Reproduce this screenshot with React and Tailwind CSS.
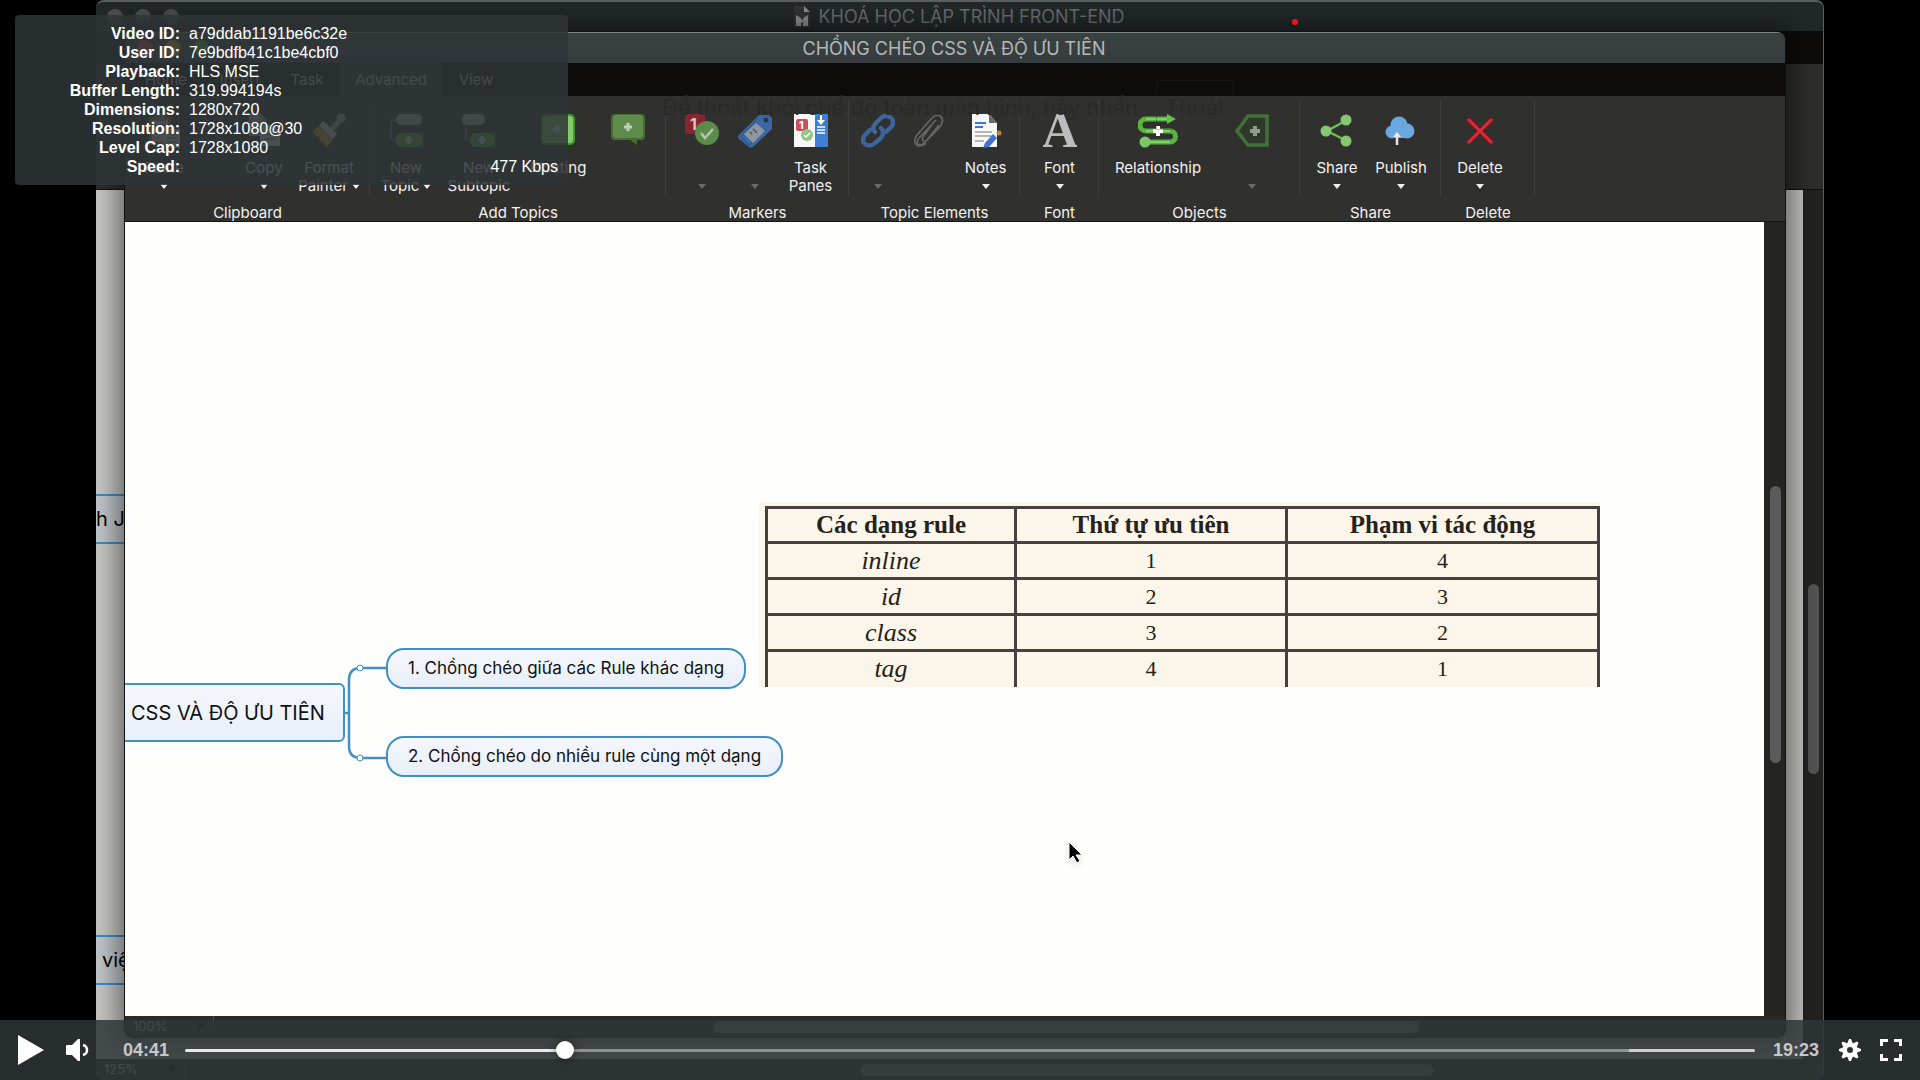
import React from "react";

const Svg = ({ children, dim, w = 34 }) => (
  <svg width={w} height="34" viewBox={`0 0 ${w} 34`} className={dim ? "opacity-60" : ""} aria-hidden="true">
    {children}
  </svg>
);

const Plus = ({ x, y, s = 4, c = "#e8ffe0", w = 3 }) => (
  <path d={`M${x - s} ${y}H${x + s}M${x} ${y - s}V${y + s}`} stroke={c} strokeWidth={w} fill="none" />
);

const icons = {
  paste: (
    <Svg>
      <rect x="2" y="3" width="22" height="28" rx="2" fill="#b8792c" />
      <rect x="5" y="6" width="16" height="22" fill="#ded9cf" />
      <rect x="8" y="0" width="10" height="7" rx="2" fill="#8a8a8a" />
      <path d="M8 11h10M8 15h10M8 19h6" stroke="#777" strokeWidth="1.5" />
      <rect x="17" y="15" width="16" height="19" fill="#e8e8e8" />
      <path d="M20 20h10M20 24h10M20 28h10" stroke="#888" strokeWidth="1.5" />
    </Svg>
  ),
  cut: (
    <Svg dim>
      <path d="M8 3l15 22M26 3L11 25" stroke="#666" strokeWidth="2" />
      <circle cx="9" cy="28" r="4" fill="none" stroke="#666" strokeWidth="2" />
      <circle cx="25" cy="28" r="4" fill="none" stroke="#666" strokeWidth="2" />
    </Svg>
  ),
  copy: (
    <Svg>
      <path d="M2 0h12l5 5v17H2z" fill="#b9b9b9" />
      <path d="M13 11h14l6 6v15H13z" fill="#e6e6e6" />
      <path d="M17 20h12M17 25h12" stroke="#777" strokeWidth="1.5" />
    </Svg>
  ),
  brush: (
    <Svg>
      <path d="M20 15l8-9" stroke="#aaa" strokeWidth="5" strokeLinecap="round" />
      <circle cx="29" cy="4" r="4.500" fill="#aaa" />
      <path d="M11 7l14 13-4 5L7 12z" fill="#ddd" />
      <path d="M6 12l15 13-6 8L0 18z" fill="#e09a20" />
      <path d="M5 16l-2 5M9 20l-3 6M13 24l-2 7" stroke="#8b5b12" strokeWidth="1" />
    </Svg>
  ),
  topic: (
    <Svg>
      <path d="M10 6H2v20h8" stroke="#777" fill="none" strokeWidth="1.5" />
      <rect x="7" y="0" width="26" height="11" rx="5" fill="#b3b3b3" />
      <rect x="7" y="19" width="27" height="14" rx="6" fill="#5fae4b" />
      <Plus x={20} y={26} />
    </Svg>
  ),
  subtopic: (
    <Svg>
      <path d="M4 10v16h6" stroke="#777" fill="none" strokeWidth="1.5" />
      <rect x="0" y="0" width="23" height="11" rx="5" fill="#b3b3b3" />
      <rect x="8" y="19" width="25" height="14" rx="6" fill="#5fae4b" />
      <Plus x={20} y={26} />
    </Svg>
  ),
  floating: (
    <Svg>
      <rect x="0" y="0" width="34" height="31" rx="5" fill="#3f9a2c" />
      <rect x="1" y="2" width="31" height="27" rx="4" fill="#84c96c" />
      <Plus x={16} y={15} />
    </Svg>
  ),
  callout: (
    <Svg>
      <path d="M4 0h26a4 4 0 0 1 4 4v18a4 4 0 0 1-4 4h-4v5l-7-5H4a4 4 0 0 1-4-4V4a4 4 0 0 1 4-4z" fill="#44702f" />
      <rect x="2" y="1" width="30" height="23" rx="4" fill="#608b4d" />
      <Plus x={17} y={13} c="#c2cfbb" />
    </Svg>
  ),
  marker: (
    <Svg>
      <rect x="0" y="0" width="20" height="20" rx="2" fill="#8a2430" />
      <text x="5" y="16" fontFamily="Inter, sans-serif" fontSize="16" fontWeight="700" fill="#d0c6c7">1</text>
      <circle cx="22" cy="19" r="12" fill="#5b8c49" />
      <path d="M16 19l4 5 8-9" stroke="#b7c5b0" strokeWidth="2.5" fill="none" />
    </Svg>
  ),
  tag: (
    <Svg>
      <path d="M21 1h10l3 3v11L15 33q-2 1-4 0L1 25q-2-2 0-4z" fill="#3b67a5" />
      <path d="M20 4l-17 19 8 8 18-16" stroke="#294f86" fill="none" />
      <path d="M18 9l9 8-12 12-9-9z" fill="#8f969f" />
      <path d="M12 18l2 2M15 15l4 4" stroke="#4c5562" strokeWidth="1.5" />
      <circle cx="28" cy="6" r="2.5" fill="#26384f" />
    </Svg>
  ),
  panes: (
    <Svg>
      <rect x="0" y="0" width="34" height="33" fill="#f8f8f8" />
      <rect x="21" y="0" width="13" height="33" fill="#3f7fd2" />
      <rect x="2" y="5" width="12" height="12" rx="2" fill="#c84f5c" />
      <text x="5" y="15" fontFamily="Inter, sans-serif" fontSize="11" fontWeight="700" fill="#fff">1</text>
      <circle cx="13" cy="21" r="6" fill="#93c489" />
      <path d="M10 21l2 2 4-4" stroke="#fff" strokeWidth="1.5" fill="none" />
      <path d="M27 1v8" stroke="#fff" strokeWidth="2" />
      <path d="M23 6h8l-4 5z" fill="#fff" />
      <path d="M23 13h8M23 16h8M23 19h8" stroke="#fff" strokeWidth="1.5" />
    </Svg>
  ),
  link: (
    <Svg>
      <g fill="none" stroke="#3d659a" strokeWidth="4.5" strokeLinecap="round">
        <path d="M14 18c-3-3-2-6 1-9l5-5c3-3 7-3 10 0s3 6 0 9l-5 5" />
        <path d="M20 14c3 3 3 6 0 10l-6 5c-3 3-7 3-10 1s-2-7 0-9l5-5" />
      </g>
    </Svg>
  ),
  clip: (
    <Svg>
      <path
        d="M27 11L15 26c-2 3-6 1-4-3L21 9M24 6L7 24c-4 5 0 9 4 6L27 14c5-6 4-10 1-12-3-2-6 0-9 3L5 21"
        fill="none"
        stroke="#666"
        strokeWidth="1.7"
      />
      <path d="M5 21c-4 5-2 10 2 11 3 0 5-1 7-3" fill="none" stroke="#666" strokeWidth="1.7" />
    </Svg>
  ),
  notes: (
    <Svg>
      <path d="M3 0h17l8 9v24H3z" fill="#f7f7f7" />
      <path d="M20 0l8 9h-8z" fill="#6b6b6b" />
      <path d="M6 9h11M6 13h8" stroke="#3a78c9" strokeWidth="2" />
      <path d="M6 18h17M6 22h17M6 27h9" stroke="#a0a0a0" strokeWidth="1.5" />
      <path d="M24 20l4 4-8 9-6 1 2-5z" fill="#3f74ce" />
      <circle cx="30" cy="19" r="2.5" fill="#c8802c" />
    </Svg>
  ),
  font: (
    <Svg>
      <text x="17" y="33" textAnchor="middle" fontFamily="Liberation Serif, serif" fontSize="50" fontWeight="700" fill="#bcbcbc">
        A
      </text>
    </Svg>
  ),
  relation: (
    <Svg w={40}>
      <g fill="none" stroke="#55b53f" strokeWidth="5">
        <path d="M32 5H8a5 5 0 0 0 0 12h24a5 5 0 0 1 0 11H7" />
      </g>
      <path d="M8 5h24M8 17h24M8 28h24" fill="none" stroke="#83cf6e" strokeWidth="2" />
      <path d="M29 0l9 5-9 5z" fill="#67bf52" />
      <circle cx="7" cy="28" r="5.5" fill="#7dc668" />
      <Plus x={20} y={17} s={5} c="#fff" w={4} />
    </Svg>
  ),
  boundary: (
    <Svg>
      <path d="M13 2h19v29H13L2 17z" fill="#30382c" stroke="#43703a" strokeWidth="3.5" />
      <Plus x={20} y={17} s={5} c="#8f9d8a" w={4} />
    </Svg>
  ),
  share: (
    <Svg>
      <path d="M27 6L7 17l20 10" fill="none" stroke="#6abc55" strokeWidth="2.5" />
      <circle cx="26" cy="6" r="5.5" fill="#84c870" />
      <circle cx="6" cy="17" r="5.5" fill="#84c870" />
      <circle cx="26" cy="27" r="5.5" fill="#84c870" />
    </Svg>
  ),
  publish: (
    <Svg>
      <g fill="#6aa8e2">
        <circle cx="15" cy="11" r="8.5" />
        <circle cx="8" cy="18" r="6.5" />
        <circle cx="23" cy="17" r="7.5" />
        <rect x="8" y="15" width="16" height="9" />
      </g>
      <path d="M13 31V20" stroke="#e9e9e9" strokeWidth="2.5" />
      <path d="M9 23l4-5 4 5z" fill="#e9e9e9" />
    </Svg>
  ),
  remove: (
    <Svg>
      <path d="M5 5l24 24M29 5L5 29" stroke="#8f101c" strokeWidth="5" />
      <path d="M5 5l24 24M29 5L5 29" stroke="#d5303b" strokeWidth="2.5" />
    </Svg>
  ),
};

const Caret = ({ dim }) => (
  <svg width="8" height="5" viewBox="0 0 8 5" className={dim ? "fill-[#6b6b6a]" : "fill-[#f0f0f0]"} aria-hidden="true">
    <path d="M0 0h8L4 5z" />
  </svg>
);

const groups = [
  { name: "Clipboard", w: "w-[245px]", items: [
    { i: "paste", l: "Paste", c: 1, w: "w-[78px]" },
    { i: "cut", a: "Cut", w: "w-5" },
    { i: "copy", l: "Copy", c: 1, w: "w-[82px]" },
    { i: "brush", l: "Format", l2: "Painter", c: 1, w: "w-12" },
  ] },
  { name: "Add Topics", w: "w-[296px]", items: [
    { i: "topic", l: "New", l2: "Topic", c: 1, w: "w-[72px]" },
    { i: "subtopic", l: "New", l2: "Subtopic", w: "w-[74px]" },
    { i: "floating", l: "Floating", w: "w-[84px]" },
    { i: "callout", a: "Callout", w: "w-14" },
  ] },
  { name: "Markers", w: "w-[183px]", items: [
    { i: "marker", a: "Marker", c: 2, w: "w-[72px]" },
    { i: "tag", a: "Label", c: 2, w: "w-[34px]" },
    { i: "panes", l: "Task", l2: "Panes", w: "w-[77px]" },
  ] },
  { name: "Topic Elements", w: "w-[171px]", items: [
    { i: "link", a: "Hyperlink", c: 2, w: "w-[58px]" },
    { i: "clip", a: "Attachment", w: "w-11" },
    { i: "notes", l: "Notes", c: 1, w: "w-[69px]" },
  ] },
  { name: "Font", w: "w-[79px]", items: [{ i: "font", l: "Font", c: 1, w: "w-[79px]" }] },
  { name: "Objects", w: "w-[201px]", items: [
    { i: "relation", l: "Relationship", w: "w-[118px]" },
    { i: "boundary", a: "Boundary", c: 2, w: "w-[70px]" },
  ] },
  { name: "Share", w: "w-[141px]", items: [
    { i: "share", l: "Share", c: 1, w: "w-[74px]" },
    { i: "publish", l: "Publish", c: 1, w: "w-[54px]" },
  ] },
  { name: "Delete", w: "w-[94px]", items: [{ i: "remove", l: "Delete", c: 1, w: "w-[78px]" }] },
];

function Ribbon() {
  return (
    <div className="flex h-[126px] shrink-0 overflow-hidden border-b border-[#151515] bg-[#30302e] text-[15px] leading-[18px] text-[#f2f2f2]">
      {groups.map((g) => (
        <section key={g.name} className={`flex shrink-0 flex-col pt-1 ${g.w}`}>
          <div className="flex flex-1 border-r border-[#3d3d3c] pt-3.5">
            {g.items.map((t) => (
              <button key={t.i} aria-label={t.a} className={`flex shrink-0 flex-col items-center whitespace-nowrap ${t.w}`}>
                {icons[t.i]}
                <span className="mt-[11px] h-[18px]">{t.l}</span>
                <span className="flex h-[18px] items-center gap-1">
                  {t.l2}
                  {t.c && <Caret dim={t.c === 2} />}
                </span>
              </button>
            ))}
          </div>
          <h2 className="mt-2 -mb-px text-center">{g.name}</h2>
        </section>
      ))}
    </div>
  );
}

const Lights = ({ colors }) => (
  <div className="flex gap-3">
    {colors.map((c, i) => (
      <span key={i} className={`size-4 rounded-full ${c}`} />
    ))}
  </div>
);

function StatusBar({ zoom, box, thumb }) {
  return (
    <div className="flex h-[21px] shrink-0 items-center bg-[#2a2a28] text-[13px] text-[#c8c8c8]">
      <button className={`flex h-full items-center justify-between border-r border-[#4c4c4b] px-2 ${box}`}>
        {zoom}
        <svg width="9" height="8" viewBox="0 0 9 8" aria-hidden="true"><path d="M0 0h9L4 8z" fill="#0c0c0c" /></svg>
      </button>
      <div className="flex-1">
        <div className={`h-3 rounded-full bg-[#6c6c6b] ${thumb}`} />
      </div>
    </div>
  );
}

function BackWindow() {
  return (
    <div className="absolute inset-0 flex flex-col overflow-hidden rounded-lg border-t-2 border-r border-[#5b6061] bg-[#222221]">
      <div className="flex h-[29px] shrink-0 items-center bg-[#22282a] px-[11px]">
        <Lights colors={["bg-[#4a4d4e]", "bg-[#4a4d4e]", "bg-[#4a4d4e]"]} />
        <div className="flex flex-1 items-center justify-center gap-2 pr-[72px] text-lg text-[#6b6f70]">
          <svg width="16" height="21" viewBox="0 0 16 21" aria-hidden="true">
            <path d="M0 0h10l6 6v15H0z" fill="#303435" />
            <path d="M10 0l6 6h-6z" fill="#8b8d8e" />
            <path d="M2 9l5 3v8H2zM14 9l-5 3v8h5zM6 12l4 3-4 3z" fill="#8b8d8e" />
          </svg>
          KHOÁ HỌC LẬP TRÌNH FRONT-END
        </div>
      </div>
      <div className="h-[33px] shrink-0 bg-[#0d0c0b]" />
      <div className="h-[126px] shrink-0 border-b border-[#111] bg-[#2e2e2d]" />
      <div className="flex min-h-0 flex-1">
        <div className="relative flex-1 overflow-hidden bg-[#c9c9c7] text-xl text-black">
          <div className="absolute top-[304px] left-0 flex h-[50px] items-center border-y-2 border-[#3f8fc4] bg-[#c3c8cc] whitespace-nowrap">h JavaScript</div>
          <div className="absolute top-[745px] left-0 flex h-[50px] items-center border-y-2 border-[#3f8fc4] bg-[#c3c8cc] px-1.5 whitespace-nowrap">việc</div>
        </div>
        <div className="w-5 pt-[394px] pr-1 pl-[5px]">
          <div className="h-[190px] rounded-full bg-[#545454]" />
        </div>
      </div>
      <StatusBar zoom="125%" box="w-[89px]" thumb="ml-[675px] w-[574px]" />
    </div>
  );
}

const rules = [
  ["inline", 1, 4],
  ["id", 2, 3],
  ["class", 3, 2],
  ["tag", 4, 1],
];

function RuleTable() {
  return (
    <div className="absolute top-[280px] left-[634px] w-[841px] bg-[#fcf6ea] pt-1 pl-1.5 font-['Liberation_Serif',serif] text-[#25221c]">
      <table className="w-full table-fixed border-collapse border-x-[3px] border-t-[3px] border-[#454140] text-center">
        <colgroup>
          <col className="w-[249px]" />
          <col className="w-[271px]" />
          <col />
        </colgroup>
        <thead>
          <tr className="h-[35px] text-[25px] leading-7">
            {["Các dạng rule", "Thứ tự ưu tiên", "Phạm vi tác động"].map((h) => (
              <th key={h} className="border-x-[3px] border-[#454140]">{h}</th>
            ))}
          </tr>
        </thead>
        <tbody>
          {rules.map(([n, a, b]) => (
            <tr key={n} className="h-9 border-t-[3px] border-[#454140] text-[22px] leading-7">
              <td className="text-[26px] italic">{n}</td>
              <td className="border-x-[3px] border-[#454140]">{a}</td>
              <td>{b}</td>
            </tr>
          ))}
        </tbody>
      </table>
    </div>
  );
}

function Canvas() {
  const node = "absolute flex items-center whitespace-nowrap border-2 border-[#4290c2] bg-linear-to-b from-[#f4f7fc] to-[#e9eff8] text-[#111]";
  return (
    <div className="relative flex-1 overflow-hidden bg-[#fefefd]">
      <svg className="absolute top-[430px] left-[218px]" width="45" height="120" viewBox="0 0 45 120" fill="none" stroke="#4290c2" strokeWidth="2.5" aria-hidden="true">
        <path d="M0 61h6M45 16H18q-12 0-12 12v66q0 12 12 12h27" />
        <circle cx="17" cy="16" r="3" fill="#fff" strokeWidth="1" />
        <circle cx="17" cy="106" r="3" fill="#fff" strokeWidth="1" />
      </svg>
      <div className={`${node} top-[461px] -left-2 h-[59px] rounded-md pr-[18px] pl-3 text-xl`}>CSS VÀ ĐỘ ƯU TIÊN</div>
      <div className={`${node} top-[426px] left-[261px] h-[41px] rounded-[18px] px-5 text-[17px]`}>1. Chồng chéo giữa các Rule khác dạng</div>
      <div className={`${node} top-[514px] left-[261px] h-[41px] rounded-[18px] px-5 text-[17px]`}>2. Chồng chéo do nhiều rule cùng một dạng</div>
      <RuleTable />
      <svg className="absolute top-[618px] left-[942px] drop-shadow-md" width="17" height="26" viewBox="0 0 17 26" aria-hidden="true">
        <path d="M2 2v18l4-4 4 7 3-2-4-6h6z" fill="#000" stroke="#fff" />
      </svg>
    </div>
  );
}

function FrontWindow() {
  return (
    <div className="absolute top-8 right-[39px] bottom-[43px] left-[29px] flex flex-col overflow-hidden rounded-lg bg-[#262625] shadow-[0_0_0_1px_#111,0_2px_28px_8px_rgba(0,0,0,0.5)]">
      <div className="flex h-[31px] shrink-0 items-center border-t border-[#7c8484] bg-linear-to-b from-[#394140] to-[#373c3f] px-3">
        <Lights colors={["bg-[#e0404a]", "bg-[#d9b22e]", "bg-[#43b53c]"]} />
        <h1 className="flex-1 pt-px pr-[74px] text-center text-lg text-[#b4b8b8]">CHỒNG CHÉO CSS VÀ ĐỘ ƯU TIÊN</h1>
      </div>
      <nav className="flex h-[33px] shrink-0 bg-[#0d0c0a] pl-px text-[15px] text-[#c4c4c4]">
        <button className="w-20 pt-0.5">Home</button>
        <button className="w-[68px] pt-0.5">Insert</button>
        <button className="w-[66px] pt-0.5">Task</button>
        <button className="w-[102px] bg-[#30302e] pt-0.5">Advanced</button>
        <button className="w-[68px] pt-0.5">View</button>
      </nav>
      <Ribbon />
      <div className="flex min-h-0 flex-1">
        <Canvas />
        <div className="w-[21px] bg-[#242423] pt-[264px] pr-1 pl-1.5">
          <div className="h-[277px] rounded-full bg-[#5b5b5b]" />
        </div>
      </div>
      <StatusBar zoom="100%" box="w-[89px]" thumb="ml-[499px] w-[707px]" />
      <div className="absolute top-12 left-[537px] flex items-center gap-[18px] text-[22px] whitespace-nowrap text-[#2a2a29]">
        <span className="pt-1">Để thoát khỏi chế độ toàn màn hình, hãy nhấn</span>
        <span className="flex h-[50px] items-center border border-[#2a2a29]/30 px-2 pt-1">Thoát</span>
      </div>
    </div>
  );
}

const stats = [
  ["Video ID", "a79ddab1191be6c32e"],
  ["User ID", "7e9bdfb41c1be4cbf0"],
  ["Playback", "HLS MSE"],
  ["Buffer Length", "319.994194s"],
  ["Dimensions", "1280x720"],
  ["Resolution", "1728x1080@30"],
  ["Level Cap", "1728x1080"],
  ["Speed", "477 Kbps"],
];

function Stats() {
  return (
    <dl className="absolute top-[15px] left-[15px] grid w-[553px] grid-cols-[165px_1fr] gap-x-[9px] rounded bg-[#2f3437]/86 py-[9px] pr-2.5 font-['Liberation_Sans',sans-serif] text-base leading-[19px] text-white">
      {stats.map(([k, v]) => (
        <React.Fragment key={k}>
          <dt className="text-right font-bold">{k}:</dt>
          <dd className={k === "Speed" ? "text-right" : ""}>{v}</dd>
        </React.Fragment>
      ))}
    </dl>
  );
}

function Controls() {
  const played = 24.2;
  const buffered = 92;
  return (
    <div className="absolute inset-x-0 bottom-0 flex h-[60px] items-center bg-[#2f3437]/86 pr-[18px] pl-[18px] font-['Liberation_Sans',sans-serif] text-lg font-bold text-[#c6c8c9]">
      <button aria-label="Play">
        <svg width="26" height="30" viewBox="0 0 26 30" aria-hidden="true"><path d="M0 0l26 15L0 30z" fill="#fff" /></svg>
      </button>
      <button aria-label="Mute" className="ml-[22px]">
        <svg width="23" height="22" viewBox="0 0 23 22" aria-hidden="true">
          <path d="M0 7q0-1 1-1h5l6-6h2v22h-2l-6-6H1q-1 0-1-1z" fill="#fff" />
          <path d="M17 6q4 1 4 5t-4 5" fill="none" stroke="#fff" strokeWidth="2.5" />
        </svg>
      </button>
      <span className="ml-[34px]">04:41</span>
      <input
        type="range"
        aria-label="Seek"
        min="0"
        max="1163"
        defaultValue="278"
        className="mr-[18px] ml-4 h-[3px] flex-1 appearance-none rounded-full [&::-webkit-slider-thumb]:size-[18px] [&::-webkit-slider-thumb]:appearance-none [&::-webkit-slider-thumb]:rounded-full [&::-webkit-slider-thumb]:bg-white [&::-webkit-slider-thumb]:shadow-[0_0_8px_rgba(0,0,0,0.5)]"
        style={{
          background: `linear-gradient(to right, #e8e9ea ${played}%, #8e9294 ${played}%, #8e9294 ${buffered}%, #cfcfcf ${buffered}%)`,
        }}
      />
      <span>19:23</span>
      <button aria-label="Settings" className="ml-5">
        <svg width="22" height="22" viewBox="-11 -11 22 22" fill="#fff" aria-hidden="true">
          {[0, 45, 90, 135].map((r) => (
            <path key={r} d="M-3 -6L-1 -11H1L3 -6V6L1 11H-1L-3 6z" transform={`rotate(${r})`} />
          ))}
          <circle r="7" />
          <circle r="3" fill="#2a2f31" />
        </svg>
      </button>
      <button aria-label="Full screen" className="ml-[19px]">
        <svg width="22" height="22" viewBox="0 0 22 22" fill="none" stroke="#fff" strokeWidth="3" aria-hidden="true">
          <path d="M1.500 7V1.500H8M14 1.500h6.500V7M20.500 15v5.500H14M8 20.500H1.500V15" />
        </svg>
      </button>
    </div>
  );
}

export default function App() {
  return (
    <main className="relative h-screen overflow-hidden bg-black px-24 font-['Inter',sans-serif]">
      <div className="relative h-full">
        <BackWindow />
        <FrontWindow />
        <span className="absolute top-[19px] left-[1196px] size-1.5 rounded-full bg-[#f01414]" />
      </div>
      <Stats />
      <Controls />
    </main>
  );
}
